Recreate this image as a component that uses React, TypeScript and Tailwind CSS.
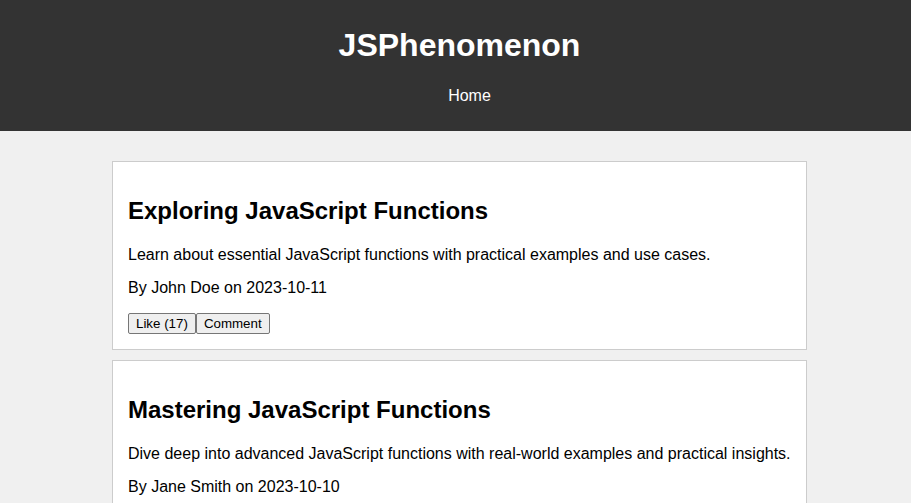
const posts = [
  {
    title: "Exploring JavaScript Functions",
    text: "Learn about essential JavaScript functions with practical examples and use cases.",
    author: "John Doe",
    date: "2023-10-11",
    likes: 17,
  },
  {
    title: "Mastering JavaScript Functions",
    text: "Dive deep into advanced JavaScript functions with real-world examples and practical insights.",
    author: "Jane Smith",
    date: "2023-10-10",
    likes: 12,
  },
];

export default function App() {
  return (
    <div className="min-h-screen bg-[#f0f0f0] text-black font-['Liberation_Sans',Arial,sans-serif]">
      <header className="bg-[#333] text-white text-center pt-[27px] h-[131px]">
        <h1 className="text-[32px] font-bold leading-[37px] pl-[8px]">JSPhenomenon</h1>
        <nav className="mt-[23px] pl-[28px] text-[16px] leading-[18px]">
          <a>Home</a>
        </nav>
      </header>

      <main className="pt-[30px] pb-4">
        {posts.map((p, i) => (
          <article key={i} className="ml-[112px] w-[695px] bg-white border border-[#ccc] pl-[15px] pr-[12px] pt-4 pb-[15px] mb-[10px]">
            <h2 className="text-[24px] font-bold leading-[27.6px] mt-[19px] mb-[21px]">{p.title}</h2>
            <p className="text-[16px] leading-[18.4px] mb-[15px] whitespace-nowrap">{p.text}</p>
            <p className="text-[16px] leading-[18.4px] mb-4">
              By {p.author} on {p.date}
            </p>
            <div className="flex">
              <button className="bg-[#efefef] border border-[#767676] rounded-[2px] px-[7px] py-[1px] text-[13.33px] leading-[17px]">
                Like ({p.likes})
              </button>
              <button className="bg-[#efefef] border border-[#767676] rounded-[2px] px-[7px] py-[1px] text-[13.33px] leading-[17px]">
                Comment
              </button>
            </div>
          </article>
        ))}
      </main>
    </div>
  );
}
